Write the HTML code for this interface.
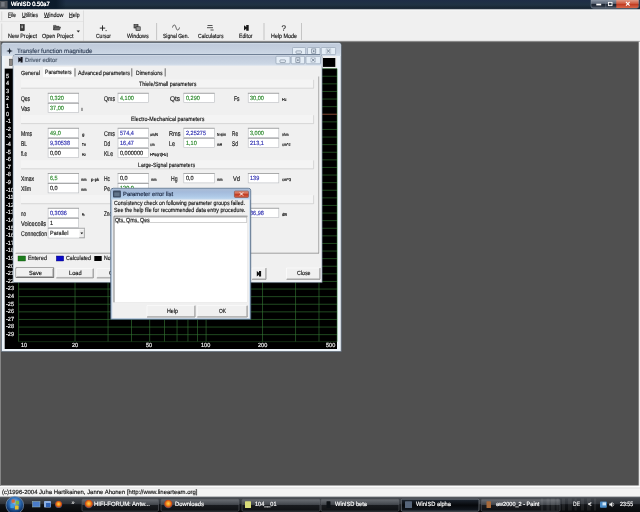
<!DOCTYPE html><html><head><meta charset="utf-8"><title>WinISD 0.50a7</title>
<style>
html,body{margin:0;padding:0;}
body{width:640px;height:512px;overflow:hidden;background:#505050;font-family:"Liberation Sans",sans-serif;text-rendering:geometricPrecision;}
#root{position:relative;width:640px;height:512px;overflow:hidden;background:#505050;filter:blur(0.3px);}
#root div{position:absolute;box-sizing:border-box;}
#root svg.L{position:absolute;left:0;top:0;overflow:visible;}
.t{position:absolute;white-space:nowrap;line-height:8px;height:8px;-webkit-text-stroke:0.16px;transform-origin:0 50%;}
.t u{text-decoration-thickness:0.4px;text-underline-offset:0.4px;text-decoration-color:#555;}
</style></head><body><div id="root">
<svg class="L" width="640" height="512" viewBox="0 0 640 512"><defs><linearGradient id="gT" x1="0" y1="0" x2="0" y2="1"><stop offset="0" stop-color="#1d2d47"/><stop offset="0.5" stop-color="#1f3243"/><stop offset="0.8" stop-color="#172533"/><stop offset="0.92" stop-color="#273442"/><stop offset="1" stop-color="#9aa3ad"/></linearGradient><linearGradient id="gTd" x1="0" y1="0" x2="1" y2="0"><stop offset="0" stop-color="#0b1a2a" stop-opacity="0.95"/><stop offset="0.85" stop-color="#0b1a2a" stop-opacity="0.95"/><stop offset="1" stop-color="#0b1a2a" stop-opacity="0"/></linearGradient><linearGradient id="gR" x1="0" y1="0" x2="0" y2="1"><stop offset="0" stop-color="#e09a86"/><stop offset="0.45" stop-color="#cf5a40"/><stop offset="0.55" stop-color="#c23c22"/><stop offset="1" stop-color="#d4664a"/></linearGradient><linearGradient id="gC" x1="0" y1="0" x2="0" y2="1"><stop offset="0" stop-color="#8993a2"/><stop offset="0.42" stop-color="#5d6878"/><stop offset="0.5" stop-color="#1d2532"/><stop offset="0.75" stop-color="#27303e"/><stop offset="1" stop-color="#56616f"/></linearGradient><linearGradient id="gW" x1="0" y1="0" x2="0" y2="1"><stop offset="0" stop-color="#d2dce8"/><stop offset="0.12" stop-color="#c0cbdb"/><stop offset="0.75" stop-color="#cad5e3"/><stop offset="1" stop-color="#d8e2ed"/></linearGradient><linearGradient id="gA" x1="0" y1="0" x2="0" y2="1"><stop offset="0" stop-color="#abbdd6"/><stop offset="0.3" stop-color="#a4bbdb"/><stop offset="0.75" stop-color="#b0cbe8"/><stop offset="1" stop-color="#c4daef"/></linearGradient></defs><rect x="0" y="0" width="640" height="9.9" fill="url(#gT)"/><rect x="0" y="0" width="66" height="8.6" fill="url(#gTd)"/><rect x="0" y="0.8" width="7.6" height="7.8" fill="#50545a"/><rect x="1.2" y="2" width="3.4" height="4.6" fill="#777b82"/><path d="M591 0 H638.8 V6 Q638.8 8.2 636.6 8.2 H593.2 Q591 8.2 591 6 Z" fill="url(#gC)" stroke="#8e98a6" stroke-width="0.5"/><path d="M616.3 0 H638.5 V6 Q638.5 7.9 636.5 7.9 H616.3 Z" fill="url(#gR)"/><path d="M605.8 0L605.8 8" stroke="#7d8796" stroke-width="0.5"/><rect x="596.3" y="3.7" width="4.9" height="1.7" fill="#fff"/><rect x="608.4" y="2.4" width="3.6" height="3.2" fill="#39424f" stroke="#fff" stroke-width="0.9"/><path d="M626 2 L629.6 5.6 M629.6 2 L626 5.6" fill="none" stroke="#fff" stroke-width="1.1"/><rect x="0" y="9.6" width="640" height="31.8" fill="#f0f0f0"/><rect x="0" y="9.6" width="640" height="0.8" fill="#f8f9fb"/><path d="M0 21.5L83.5 21.5" stroke="#dadada" stroke-width="0.5"/><path d="M83.5 10.5L83.5 41" stroke="#d2d2d2" stroke-width="0.6"/><path d="M1.7 11.5L1.7 20.5" stroke="#c8c8c8" stroke-width="0.6"/><path d="M1.7 23.5L1.7 40" stroke="#c8c8c8" stroke-width="0.6"/><path d="M0 41.2L640 41.2" stroke="#b0b0b0" stroke-width="0.6"/><path d="M0 41.9L640 41.9" stroke="#6a6a6a" stroke-width="0.6"/><path d="M156.6 23L156.6 40" stroke="#a8a8a8" stroke-width="0.6"/><path d="M264 23L264 40" stroke="#a8a8a8" stroke-width="0.6"/><path d="M301.5 23L301.5 40" stroke="#a8a8a8" stroke-width="0.6"/><rect x="20.4" y="24.6" width="3.8" height="6" fill="#3a3a3a" stroke="#151515" stroke-width="0.6"/><rect x="21.6" y="25.6" width="1" height="2.6" fill="#e4e4e4"/><path d="M53.5 30 L54.6 27 L60.6 27 L59.5 30 Z M53.5 30 V25.4 H56 L56.6 26.3 H59 V27" fill="#666" stroke="#2a2a2a" stroke-width="0.5"/><path d="M76.6 30.6 H80 L78.3 32.6 Z" fill="#222"/><path d="M102.5 25.4 V30.8 M99.8 28.1 H105.2" fill="none" stroke="#1a1a1a" stroke-width="0.9"/><rect x="105.6" y="30.1" width="1" height="1" fill="#222"/><rect x="134" y="24.6" width="4" height="3.4" fill="#777" stroke="#1a1a1a" stroke-width="0.6"/><rect x="136" y="26.8" width="4.2" height="3.6" fill="#999" stroke="#1a1a1a" stroke-width="0.6"/><path d="M172.5 27.5 C173.5 24 175 24 176 27.5 S178.5 31 179.5 27.5" fill="none" stroke="#333" stroke-width="0.8"/><path d="M207.5 25.5 H212.5 M207 27.7 H213 M210.5 30 H213.6" fill="none" stroke="#2a2a2a" stroke-width="0.8"/><path d="M244 25.2 L246.2 27 V25 H248.7 V30.7 H246.2 V28.8 L244 30.6 Z" fill="#1a1a1a"/></svg>
<span class="t" style="left:10.60px;top:1.30px;font-size:6.2px;color:#fff;transform:scaleX(0.932);text-shadow:0 0 0.4px #fff;">WinISD 0.50a7</span>
<span class="t" style="left:8px;top:12.40px;font-size:6.1px;color:#151515;transform:scaleX(0.813);"><u>F</u>ile</span>
<span class="t" style="left:22px;top:12.40px;font-size:6.1px;color:#151515;transform:scaleX(0.814);"><u>U</u>tilities</span>
<span class="t" style="left:43.50px;top:12.40px;font-size:6.1px;color:#151515;transform:scaleX(0.899);"><u>W</u>indow</span>
<span class="t" style="left:68.50px;top:12.40px;font-size:6.1px;color:#151515;transform:scaleX(0.837);"><u>H</u>elp</span>
<span class="t" style="left:8px;top:32.60px;font-size:6.1px;color:#151515;transform:scaleX(0.883);">New Project</span>
<span class="t" style="left:41.50px;top:32.60px;font-size:6.1px;color:#151515;transform:scaleX(0.885);">Open Project</span>
<span class="t" style="left:95.60px;top:32.60px;font-size:6.1px;color:#151515;transform:scaleX(0.820);">Cursor</span>
<span class="t" style="left:126.90px;top:32.60px;font-size:6.1px;color:#151515;transform:scaleX(0.873);">Windows</span>
<span class="t" style="left:163px;top:32.60px;font-size:6.1px;color:#151515;transform:scaleX(0.816);">Signal Gen.</span>
<span class="t" style="left:198px;top:32.60px;font-size:6.1px;color:#151515;transform:scaleX(0.836);">Calculators</span>
<span class="t" style="left:238.50px;top:32.60px;font-size:6.1px;color:#151515;transform:scaleX(0.848);">Editor</span>
<span class="t" style="left:270.50px;top:32.60px;font-size:6.1px;color:#151515;transform:scaleX(0.882);">Help Mode</span>
<span class="t" style="left:281.60px;top:24.80px;font-size:8px;color:#2a2a2a;">?</span>
<svg class="L" width="640" height="512" viewBox="0 0 640 512"><path d="M1.4 351.6 V45.2 Q1.4 42.7 3.9 42.7 H338.7 Q341.2 42.7 341.2 45.2 V351.6 Z" fill="#edf4fa" stroke="#566474" stroke-width="0.7"/><path d="M1.8 56 V45.2 Q1.8 43.1 3.9 43.1 H338.7 Q340.8 43.1 340.8 45.2 V56 Z" fill="url(#gW)"/><rect x="4.7" y="56" width="332.3" height="12.6" fill="#efefef"/><rect x="9.6" y="59.2" width="2.8" height="6.2" fill="#8a8580" stroke="#4a4a4a" stroke-width="0.6"/><rect x="323" y="58" width="12.3" height="8.9" fill="#000"/><rect x="4.7" y="68.6" width="332.3" height="280.4" fill="#000"/><path d="M9.6 47.8 L10.4 50.3 L12.9 51 L10.4 51.7 L9.6 54.2 L8.8 51.7 L6.3 51 L8.8 50.3 Z" fill="#1d2533"/><rect x="292.5" y="47.5" width="13.1" height="7.1" fill="#e4edf6" stroke="#8b9bad" stroke-width="0.6" rx="0.8"/><rect x="307.5" y="47.5" width="12.5" height="7.1" fill="#e4edf6" stroke="#8b9bad" stroke-width="0.6" rx="0.8"/><rect x="321.3" y="47.5" width="14.3" height="7.1" fill="#e4edf6" stroke="#8b9bad" stroke-width="0.6" rx="0.8"/><rect x="296.05" y="50.908" width="5.4" height="2.414" fill="none" stroke="#6c7a8c" stroke-width="0.6" rx="0.5"/><rect x="311.75" y="48.92" width="4" height="4.26" fill="none" stroke="#6c7a8c" stroke-width="0.7"/><rect x="313.05" y="50.34" width="1.4" height="1.562" fill="#6c7a8c"/><rect x="326.05" y="48.92" width="4.8" height="4.26" fill="none" stroke="#a3afbe" stroke-width="0.5"/><path d="M326.85 49.488 L330.05 52.612 M330.05 49.488 L326.85 52.612" fill="none" stroke="#6c7a8c" stroke-width="0.9"/><path d="M18.6 68.65H337M18.6 76.25H337M18.6 83.85H337M18.6 91.45H337M18.6 99.05H337M18.6 106.65H337M18.6 114.25H337M18.6 121.85H337M18.6 129.45H337M18.6 137.05H337M18.6 144.65H337M18.6 152.25H337M18.6 159.85H337M18.6 167.45H337M18.6 175.05H337M18.6 182.65H337M18.6 190.25H337M18.6 197.85H337M18.6 205.45H337M18.6 213.05H337M18.6 220.65H337M18.6 228.25H337M18.6 235.85H337M18.6 243.45H337M18.6 251.05H337M18.6 258.65H337M18.6 266.25H337M18.6 273.85H337M18.6 281.45H337M18.6 289.05H337M18.6 296.65H337M18.6 304.25H337M18.6 311.85H337M18.6 319.45H337M18.6 327.05H337M18.6 334.65H337M18.60 68.65V341.65M75.04 68.65V341.65M108.06 68.65V341.65M131.49 68.65V341.65M149.66 68.65V341.65M164.50 68.65V341.65M177.06 68.65V341.65M187.93 68.65V341.65M197.52 68.65V341.65M206.10 68.65V341.65M262.54 68.65V341.65M295.56 68.65V341.65M318.99 68.65V341.65M337.16 68.65V341.65" fill="none" stroke="#357a35" stroke-width="0.6"/><path d="M18.6 341.65L337 341.65" stroke="#1f4a1f" stroke-width="0.6"/><path d="M18.6 114.25L337 114.25" stroke="#a03030" stroke-width="0.7"/></svg>
<span class="t" style="left:16.50px;top:48.30px;font-size:6.2px;color:#36455c;transform:scaleX(0.983);">Transfer function magnitude</span>
<span class="t" style="left:6.10px;top:72.55px;font-size:5.9px;color:#f4f4f4;transform:scaleX(0.940);">5</span>
<span class="t" style="left:6.10px;top:80.15px;font-size:5.9px;color:#f4f4f4;transform:scaleX(0.940);">4</span>
<span class="t" style="left:6.10px;top:87.75px;font-size:5.9px;color:#f4f4f4;transform:scaleX(0.940);">3</span>
<span class="t" style="left:6.10px;top:95.35px;font-size:5.9px;color:#f4f4f4;transform:scaleX(0.940);">2</span>
<span class="t" style="left:6.10px;top:102.95px;font-size:5.9px;color:#f4f4f4;transform:scaleX(0.940);">1</span>
<span class="t" style="left:6.10px;top:110.55px;font-size:5.9px;color:#f4f4f4;transform:scaleX(0.940);">0</span>
<span class="t" style="left:6.10px;top:118.15px;font-size:5.9px;color:#f4f4f4;transform:scaleX(0.940);">-1</span>
<span class="t" style="left:6.10px;top:125.75px;font-size:5.9px;color:#f4f4f4;transform:scaleX(0.940);">-2</span>
<span class="t" style="left:6.10px;top:133.35px;font-size:5.9px;color:#f4f4f4;transform:scaleX(0.940);">-3</span>
<span class="t" style="left:6.10px;top:140.95px;font-size:5.9px;color:#f4f4f4;transform:scaleX(0.940);">-4</span>
<span class="t" style="left:6.10px;top:148.55px;font-size:5.9px;color:#f4f4f4;transform:scaleX(0.940);">-5</span>
<span class="t" style="left:6.10px;top:156.15px;font-size:5.9px;color:#f4f4f4;transform:scaleX(0.940);">-6</span>
<span class="t" style="left:6.10px;top:163.75px;font-size:5.9px;color:#f4f4f4;transform:scaleX(0.940);">-7</span>
<span class="t" style="left:6.10px;top:171.35px;font-size:5.9px;color:#f4f4f4;transform:scaleX(0.940);">-8</span>
<span class="t" style="left:6.10px;top:178.95px;font-size:5.9px;color:#f4f4f4;transform:scaleX(0.940);">-9</span>
<span class="t" style="left:6.10px;top:186.55px;font-size:5.9px;color:#f4f4f4;transform:scaleX(0.940);">-10</span>
<span class="t" style="left:6.10px;top:194.15px;font-size:5.9px;color:#f4f4f4;transform:scaleX(0.940);">-11</span>
<span class="t" style="left:6.10px;top:201.75px;font-size:5.9px;color:#f4f4f4;transform:scaleX(0.940);">-12</span>
<span class="t" style="left:6.10px;top:209.35px;font-size:5.9px;color:#f4f4f4;transform:scaleX(0.940);">-13</span>
<span class="t" style="left:6.10px;top:216.95px;font-size:5.9px;color:#f4f4f4;transform:scaleX(0.940);">-14</span>
<span class="t" style="left:6.10px;top:224.55px;font-size:5.9px;color:#f4f4f4;transform:scaleX(0.940);">-15</span>
<span class="t" style="left:6.10px;top:232.15px;font-size:5.9px;color:#f4f4f4;transform:scaleX(0.940);">-16</span>
<span class="t" style="left:6.10px;top:239.75px;font-size:5.9px;color:#f4f4f4;transform:scaleX(0.940);">-17</span>
<span class="t" style="left:6.10px;top:247.35px;font-size:5.9px;color:#f4f4f4;transform:scaleX(0.940);">-18</span>
<span class="t" style="left:6.10px;top:254.95px;font-size:5.9px;color:#f4f4f4;transform:scaleX(0.940);">-19</span>
<span class="t" style="left:6.10px;top:262.55px;font-size:5.9px;color:#f4f4f4;transform:scaleX(0.940);">-20</span>
<span class="t" style="left:6.10px;top:270.15px;font-size:5.9px;color:#f4f4f4;transform:scaleX(0.940);">-21</span>
<span class="t" style="left:6.10px;top:277.75px;font-size:5.9px;color:#f4f4f4;transform:scaleX(0.940);">-22</span>
<span class="t" style="left:6.10px;top:285.35px;font-size:5.9px;color:#f4f4f4;transform:scaleX(0.940);">-23</span>
<span class="t" style="left:6.10px;top:292.95px;font-size:5.9px;color:#f4f4f4;transform:scaleX(0.940);">-24</span>
<span class="t" style="left:6.10px;top:300.55px;font-size:5.9px;color:#f4f4f4;transform:scaleX(0.940);">-25</span>
<span class="t" style="left:6.10px;top:308.15px;font-size:5.9px;color:#f4f4f4;transform:scaleX(0.940);">-26</span>
<span class="t" style="left:6.10px;top:315.75px;font-size:5.9px;color:#f4f4f4;transform:scaleX(0.940);">-27</span>
<span class="t" style="left:6.10px;top:323.35px;font-size:5.9px;color:#f4f4f4;transform:scaleX(0.940);">-28</span>
<span class="t" style="left:6.10px;top:330.95px;font-size:5.9px;color:#f4f4f4;transform:scaleX(0.940);">-29</span>
<span class="t" style="left:20.72px;top:341.90px;font-size:5.9px;color:#f4f4f4;transform:scaleX(0.940);">10</span>
<span class="t" style="left:71.92px;top:341.90px;font-size:5.9px;color:#f4f4f4;transform:scaleX(0.940);">20</span>
<span class="t" style="left:146.12px;top:341.90px;font-size:5.9px;color:#f4f4f4;transform:scaleX(0.940);">50</span>
<span class="t" style="left:201.37px;top:341.90px;font-size:5.9px;color:#f4f4f4;transform:scaleX(0.940);">100</span>
<span class="t" style="left:257.77px;top:341.90px;font-size:5.9px;color:#f4f4f4;transform:scaleX(0.940);">200</span>
<span class="t" style="left:326.07px;top:341.90px;font-size:5.9px;color:#f4f4f4;transform:scaleX(0.940);">500</span>
<svg class="L" width="640" height="512" viewBox="0 0 640 512"><path d="M13 282.6 V57.2 Q13 54.8 15.4 54.8 H319.7 Q322.1 54.8 322.1 57.2 V282.6 Z" fill="#eaf1f8" stroke="#5f6f80" stroke-width="0.6"/><path d="M13.4 66 V57.2 Q13.4 55.2 15.4 55.2 H319.7 Q321.7 55.2 321.7 57.2 V66 Z" fill="url(#gW)"/><rect x="14.4" y="65.6" width="306.4" height="215.8" fill="#f0f0f0"/><path d="M15 54.5L320 54.5" stroke="#6a7a90" stroke-width="0.9"/><path d="M18.3 57 L20.5 58.8 V56.9 H22.6 V62.6 H20.5 V60.7 L18.3 62.5 Z" fill="#15151d"/><rect x="276" y="56.3" width="14" height="7.5" fill="#e4edf6" stroke="#8b9bad" stroke-width="0.6" rx="0.8"/><rect x="291.2" y="56.3" width="13.4" height="7.5" fill="#e4edf6" stroke="#8b9bad" stroke-width="0.6" rx="0.8"/><rect x="306" y="56.3" width="14.5" height="7.5" fill="#e4edf6" stroke="#8b9bad" stroke-width="0.6" rx="0.8"/><rect x="280" y="59.9" width="5.4" height="2.55" fill="none" stroke="#6c7a8c" stroke-width="0.6" rx="0.5"/><rect x="295.9" y="57.8" width="4" height="4.5" fill="none" stroke="#6c7a8c" stroke-width="0.7"/><rect x="297.2" y="59.3" width="1.4" height="1.65" fill="#6c7a8c"/><rect x="310.85" y="57.8" width="4.8" height="4.5" fill="none" stroke="#a3afbe" stroke-width="0.5"/><path d="M311.65 58.4 L314.85 61.7 M314.85 58.4 L311.65 61.7" fill="none" stroke="#6c7a8c" stroke-width="0.9"/><rect x="43" y="67" width="30.8" height="10.2" fill="#fbfbfb"/><path d="M75 68.3L75 76.5" stroke="#6e6e6e" stroke-width="1"/><path d="M131.8 68.3L131.8 76.5" stroke="#6e6e6e" stroke-width="1"/><path d="M165.2 68.3L165.2 76.5" stroke="#6e6e6e" stroke-width="1"/><path d="M318.7 76.5L318.7 253.2" stroke="#8c8c8c" stroke-width="0.7"/><path d="M15.6 253.2L319 253.2" stroke="#7c7c7c" stroke-width="0.7"/><path d="M15.8 77L15.8 253" stroke="#fafafa" stroke-width="0.6"/><rect x="21" y="79.6" width="292.6" height="8.6" fill="#f4f4f4"/><path d="M21 88.2 H313.6 V79.8" fill="none" stroke="#c2c2c2" stroke-width="0.6"/><rect x="21" y="115" width="292.6" height="8.6" fill="#f4f4f4"/><path d="M21 123.6 H313.6 V115.2" fill="none" stroke="#c2c2c2" stroke-width="0.6"/><rect x="21" y="160.2" width="292.6" height="8.6" fill="#f4f4f4"/><path d="M21 168.8 H313.6 V160.4" fill="none" stroke="#c2c2c2" stroke-width="0.6"/><rect x="21" y="195.1" width="292.6" height="8.6" fill="#f4f4f4"/><path d="M21 203.7 H313.6 V195.3" fill="none" stroke="#c2c2c2" stroke-width="0.6"/><rect x="48.1" y="93.25" width="30.6" height="9.4" fill="#fff" stroke="#b9bcc0" stroke-width="0.6"/><path d="M47.8 93.25L79 93.25" stroke="#8f8f8f" stroke-width="0.6"/><rect x="118" y="93.25" width="30.5" height="9.4" fill="#fff" stroke="#b9bcc0" stroke-width="0.6"/><path d="M117.7 93.25L148.8 93.25" stroke="#8f8f8f" stroke-width="0.6"/><rect x="183.8" y="93.25" width="30.5" height="9.4" fill="#fff" stroke="#b9bcc0" stroke-width="0.6"/><path d="M183.5 93.25L214.6 93.25" stroke="#8f8f8f" stroke-width="0.6"/><rect x="248.2" y="93.25" width="30.6" height="9.4" fill="#fff" stroke="#b9bcc0" stroke-width="0.6"/><path d="M247.9 93.25L279.1 93.25" stroke="#8f8f8f" stroke-width="0.6"/><rect x="48.1" y="103.25" width="30.6" height="9.4" fill="#fff" stroke="#b9bcc0" stroke-width="0.6"/><path d="M47.8 103.25L79 103.25" stroke="#8f8f8f" stroke-width="0.6"/><rect x="48.1" y="128.25" width="30.6" height="9.4" fill="#fff" stroke="#b9bcc0" stroke-width="0.6"/><path d="M47.8 128.25L79 128.25" stroke="#8f8f8f" stroke-width="0.6"/><rect x="118" y="128.25" width="30.5" height="9.4" fill="#fff" stroke="#b9bcc0" stroke-width="0.6"/><path d="M117.7 128.25L148.8 128.25" stroke="#8f8f8f" stroke-width="0.6"/><rect x="183.8" y="128.25" width="30.5" height="9.4" fill="#fff" stroke="#b9bcc0" stroke-width="0.6"/><path d="M183.5 128.25L214.6 128.25" stroke="#8f8f8f" stroke-width="0.6"/><rect x="248.2" y="128.25" width="30.6" height="9.4" fill="#fff" stroke="#b9bcc0" stroke-width="0.6"/><path d="M247.9 128.25L279.1 128.25" stroke="#8f8f8f" stroke-width="0.6"/><rect x="48.1" y="138.25" width="30.6" height="9.4" fill="#fff" stroke="#b9bcc0" stroke-width="0.6"/><path d="M47.8 138.25L79 138.25" stroke="#8f8f8f" stroke-width="0.6"/><rect x="118" y="138.25" width="30.5" height="9.4" fill="#fff" stroke="#b9bcc0" stroke-width="0.6"/><path d="M117.7 138.25L148.8 138.25" stroke="#8f8f8f" stroke-width="0.6"/><rect x="183.8" y="138.25" width="30.5" height="9.4" fill="#fff" stroke="#b9bcc0" stroke-width="0.6"/><path d="M183.5 138.25L214.6 138.25" stroke="#8f8f8f" stroke-width="0.6"/><rect x="248.2" y="138.25" width="30.6" height="9.4" fill="#fff" stroke="#b9bcc0" stroke-width="0.6"/><path d="M247.9 138.25L279.1 138.25" stroke="#8f8f8f" stroke-width="0.6"/><rect x="48.1" y="148.25" width="30.6" height="9.4" fill="#fff" stroke="#b9bcc0" stroke-width="0.6"/><path d="M47.8 148.25L79 148.25" stroke="#8f8f8f" stroke-width="0.6"/><rect x="118" y="148.25" width="30.5" height="9.4" fill="#fff" stroke="#b9bcc0" stroke-width="0.6"/><path d="M117.7 148.25L148.8 148.25" stroke="#8f8f8f" stroke-width="0.6"/><rect x="48.1" y="173.5" width="30.6" height="9.4" fill="#fff" stroke="#b9bcc0" stroke-width="0.6"/><path d="M47.8 173.5L79 173.5" stroke="#8f8f8f" stroke-width="0.6"/><rect x="118" y="173.5" width="30.5" height="9.4" fill="#fff" stroke="#b9bcc0" stroke-width="0.6"/><path d="M117.7 173.5L148.8 173.5" stroke="#8f8f8f" stroke-width="0.6"/><rect x="183.8" y="173.5" width="30.5" height="9.4" fill="#fff" stroke="#b9bcc0" stroke-width="0.6"/><path d="M183.5 173.5L214.6 173.5" stroke="#8f8f8f" stroke-width="0.6"/><rect x="248.2" y="173.5" width="30.6" height="9.4" fill="#fff" stroke="#b9bcc0" stroke-width="0.6"/><path d="M247.9 173.5L279.1 173.5" stroke="#8f8f8f" stroke-width="0.6"/><rect x="48.1" y="183.5" width="30.6" height="9.4" fill="#fff" stroke="#b9bcc0" stroke-width="0.6"/><path d="M47.8 183.5L79 183.5" stroke="#8f8f8f" stroke-width="0.6"/><rect x="118" y="183.5" width="30.5" height="9.4" fill="#fff" stroke="#b9bcc0" stroke-width="0.6"/><path d="M117.7 183.5L148.8 183.5" stroke="#8f8f8f" stroke-width="0.6"/><rect x="48.1" y="208.25" width="30.6" height="9.4" fill="#fff" stroke="#b9bcc0" stroke-width="0.6"/><path d="M47.8 208.25L79 208.25" stroke="#8f8f8f" stroke-width="0.6"/><rect x="248.2" y="208.25" width="30.6" height="9.4" fill="#fff" stroke="#b9bcc0" stroke-width="0.6"/><path d="M247.9 208.25L279.1 208.25" stroke="#8f8f8f" stroke-width="0.6"/><rect x="48.1" y="218.25" width="30.6" height="9.4" fill="#fff" stroke="#b9bcc0" stroke-width="0.6"/><path d="M47.8 218.25L79 218.25" stroke="#8f8f8f" stroke-width="0.6"/><rect x="48.1" y="228.25" width="36.6" height="9.8" fill="#fff" stroke="#b9bcc0" stroke-width="0.6"/><path d="M47.8 228.25L85 228.25" stroke="#8f8f8f" stroke-width="0.6"/><rect x="79.2" y="229.2" width="5" height="8.2" fill="#ececec" stroke="#fdfdfd" stroke-width="0.5"/><path d="M79.2 237.6 H84.4 V229.2" fill="none" stroke="#6a6a6a" stroke-width="0.5"/><path d="M80.4 232.6 H83.2 L81.8 234.3 Z" fill="#111"/><rect x="18" y="256" width="7.5" height="5" fill="#1c7c1c" stroke="#0a4a0a" stroke-width="0.4"/><rect x="56.3" y="256" width="7.4" height="5" fill="#0a0ac8" stroke="#00006a" stroke-width="0.4"/><rect x="94.3" y="256" width="7.4" height="5" fill="#000"/><rect x="16" y="267.9" width="37.8" height="9.7" fill="#f0f0f0" stroke="#3a3a3a" stroke-width="0.6"/><rect x="16.6" y="268.5" width="36.6" height="8.5" fill="#f0f0f0"/><path d="M16.6 277 V268.5 H53.2" fill="none" stroke="#ffffff" stroke-width="0.6"/><path d="M16.6 277 H53.2 V268.5" fill="none" stroke="#5e5e5e" stroke-width="0.6"/><path d="M17.1 276.5 H52.7 V269" fill="none" stroke="#a8a8a8" stroke-width="0.5"/><rect x="56.3" y="268.6" width="37" height="9.3" fill="#f0f0f0"/><path d="M56.3 277.9 V268.6 H93.3" fill="none" stroke="#ffffff" stroke-width="0.6"/><path d="M56.3 277.9 H93.3 V268.6" fill="none" stroke="#5e5e5e" stroke-width="0.6"/><path d="M56.8 277.4 H92.8 V269.1" fill="none" stroke="#a8a8a8" stroke-width="0.5"/><rect x="96.8" y="268.6" width="37.2" height="9.3" fill="#f0f0f0"/><path d="M96.8 277.9 V268.6 H134" fill="none" stroke="#ffffff" stroke-width="0.6"/><path d="M96.8 277.9 H134 V268.6" fill="none" stroke="#5e5e5e" stroke-width="0.6"/><path d="M97.3 277.4 H133.5 V269.1" fill="none" stroke="#a8a8a8" stroke-width="0.5"/><rect x="252" y="268" width="14" height="11.3" fill="#f0f0f0"/><path d="M252 279.3 V268 H266" fill="none" stroke="#ffffff" stroke-width="0.6"/><path d="M252 279.3 H266 V268" fill="none" stroke="#5e5e5e" stroke-width="0.6"/><path d="M252.5 278.8 H265.5 V268.5" fill="none" stroke="#a8a8a8" stroke-width="0.5"/><path d="M256.8 271 L259 272.8 V270.9 H261.1 V276.6 H259 V274.7 L256.8 276.5 Z" fill="#111"/><rect x="286.5" y="268" width="33.5" height="11.3" fill="#f0f0f0"/><path d="M286.5 279.3 V268 H320" fill="none" stroke="#ffffff" stroke-width="0.6"/><path d="M286.5 279.3 H320 V268" fill="none" stroke="#5e5e5e" stroke-width="0.6"/><path d="M287 278.8 H319.5 V268.5" fill="none" stroke="#a8a8a8" stroke-width="0.5"/></svg>
<span class="t" style="left:25px;top:56.60px;font-size:5.9px;color:#4a586a;transform:scaleX(1.006);">Driver editor</span>
<span class="t" style="left:20.60px;top:69.60px;font-size:6.1px;color:#151515;transform:scaleX(0.871);">General</span>
<span class="t" style="left:45.30px;top:68.50px;font-size:6.1px;color:#151515;transform:scaleX(0.848);">Parameters</span>
<span class="t" style="left:77.50px;top:69.60px;font-size:6.1px;color:#151515;transform:scaleX(0.872);">Advanced parameters</span>
<span class="t" style="left:135.50px;top:69.60px;font-size:6.1px;color:#151515;transform:scaleX(0.832);">Dimensions</span>
<span class="t" style="left:139px;top:81px;font-size:6.1px;color:#151515;transform:scaleX(0.871);">Thiele/Small parameters</span>
<span class="t" style="left:131px;top:116.40px;font-size:6.1px;color:#151515;transform:scaleX(0.871);">Electro-Mechanical parameters</span>
<span class="t" style="left:138px;top:161.60px;font-size:6.1px;color:#151515;transform:scaleX(0.850);">Large-Signal parameters</span>
<span class="t" style="left:136px;top:196.50px;font-size:6.1px;color:#151515;transform:scaleX(0.857);">Miscellaneous parameters</span>
<span class="t" style="left:21px;top:95.85px;font-size:6.8px;color:#151515;transform:scaleX(0.722);">Qes</span>
<span class="t" style="left:50.30px;top:94.75px;font-size:6px;color:#2e8a2e;transform:scaleX(0.920);">0,320</span>
<span class="t" style="left:104px;top:95.85px;font-size:6.8px;color:#151515;transform:scaleX(0.766);">Qms</span>
<span class="t" style="left:120.20px;top:94.75px;font-size:6px;color:#2e8a2e;transform:scaleX(0.920);">4,100</span>
<span class="t" style="left:170px;top:95.85px;font-size:6.8px;color:#151515;transform:scaleX(0.945);">Qts</span>
<span class="t" style="left:186px;top:94.75px;font-size:6px;color:#2e8a2e;transform:scaleX(0.920);">0,290</span>
<span class="t" style="left:233.50px;top:95.85px;font-size:6.8px;color:#151515;transform:scaleX(0.727);">Fs</span>
<span class="t" style="left:250.40px;top:94.75px;font-size:6px;color:#2e8a2e;transform:scaleX(0.920);">30,00</span>
<span class="t" style="left:281.50px;top:95.75px;font-size:4.3px;color:#111;transform:scaleX(0.855);-webkit-text-stroke:0.2px;">Hz</span>
<span class="t" style="left:21px;top:105.85px;font-size:6.8px;color:#151515;transform:scaleX(0.802);">Vas</span>
<span class="t" style="left:50.30px;top:104.75px;font-size:6px;color:#2e8a2e;transform:scaleX(0.920);">37,00</span>
<span class="t" style="left:81.60px;top:105.75px;font-size:4.3px;color:#111;-webkit-text-stroke:0.2px;">l</span>
<span class="t" style="left:21px;top:130.85px;font-size:6.8px;color:#151515;transform:scaleX(0.747);">Mms</span>
<span class="t" style="left:50.30px;top:129.75px;font-size:6px;color:#2e8a2e;transform:scaleX(0.920);">49,0</span>
<span class="t" style="left:82px;top:130.75px;font-size:4.3px;color:#111;-webkit-text-stroke:0.2px;">g</span>
<span class="t" style="left:104px;top:130.85px;font-size:6.8px;color:#151515;transform:scaleX(0.787);">Cms</span>
<span class="t" style="left:120.20px;top:129.75px;font-size:6px;color:#3030b0;transform:scaleX(0.920);">574,4</span>
<span class="t" style="left:150px;top:130.75px;font-size:4.3px;color:#111;transform:scaleX(0.778);-webkit-text-stroke:0.2px;">um/N</span>
<span class="t" style="left:168.50px;top:130.85px;font-size:6.8px;color:#151515;transform:scaleX(0.822);">Rms</span>
<span class="t" style="left:186px;top:129.75px;font-size:6px;color:#3030b0;transform:scaleX(0.920);">2,25275</span>
<span class="t" style="left:217px;top:130.75px;font-size:4.3px;color:#111;transform:scaleX(0.785);-webkit-text-stroke:0.2px;">N·s/m</span>
<span class="t" style="left:232px;top:130.85px;font-size:6.8px;color:#151515;transform:scaleX(0.689);">Re</span>
<span class="t" style="left:250.40px;top:129.75px;font-size:6px;color:#2e8a2e;transform:scaleX(0.920);">3,000</span>
<span class="t" style="left:282px;top:130.75px;font-size:4.3px;color:#111;transform:scaleX(0.778);-webkit-text-stroke:0.2px;">ohm</span>
<span class="t" style="left:21px;top:140.85px;font-size:6.8px;color:#151515;transform:scaleX(0.720);">BL</span>
<span class="t" style="left:50.30px;top:139.75px;font-size:6px;color:#3030b0;transform:scaleX(0.920);">9,30538</span>
<span class="t" style="left:82px;top:140.75px;font-size:4.3px;color:#111;transform:scaleX(0.643);-webkit-text-stroke:0.2px;">Tm</span>
<span class="t" style="left:104px;top:140.85px;font-size:6.8px;color:#151515;transform:scaleX(0.689);">Dd</span>
<span class="t" style="left:120.20px;top:139.75px;font-size:6px;color:#3030b0;transform:scaleX(0.920);">16,47</span>
<span class="t" style="left:150px;top:140.75px;font-size:4.3px;color:#111;transform:scaleX(0.785);-webkit-text-stroke:0.2px;">cm</span>
<span class="t" style="left:169px;top:140.85px;font-size:6.8px;color:#151515;transform:scaleX(0.793);">Le</span>
<span class="t" style="left:186px;top:139.75px;font-size:6px;color:#2e8a2e;transform:scaleX(0.920);">1,10</span>
<span class="t" style="left:217px;top:140.75px;font-size:4.3px;color:#111;transform:scaleX(0.748);-webkit-text-stroke:0.2px;">mH</span>
<span class="t" style="left:232px;top:140.85px;font-size:6.8px;color:#151515;transform:scaleX(0.720);">Sd</span>
<span class="t" style="left:250.40px;top:139.75px;font-size:6px;color:#3030b0;transform:scaleX(0.920);">213,1</span>
<span class="t" style="left:282px;top:140.75px;font-size:4.3px;color:#111;transform:scaleX(0.838);-webkit-text-stroke:0.2px;">cm^2</span>
<span class="t" style="left:21px;top:150.85px;font-size:6.8px;color:#151515;transform:scaleX(0.635);">fLe</span>
<span class="t" style="left:50.30px;top:149.75px;font-size:6px;color:#222;transform:scaleX(0.920);">0,00</span>
<span class="t" style="left:82px;top:150.75px;font-size:4.3px;color:#111;transform:scaleX(0.760);-webkit-text-stroke:0.2px;">Hz</span>
<span class="t" style="left:104px;top:150.85px;font-size:6.8px;color:#151515;transform:scaleX(0.744);">KLe</span>
<span class="t" style="left:120.20px;top:149.75px;font-size:6px;color:#222;transform:scaleX(0.920);">0,000000</span>
<span class="t" style="left:150px;top:150.75px;font-size:4.3px;color:#111;transform:scaleX(0.897);-webkit-text-stroke:0.2px;">H*sqrt(Hz)</span>
<span class="t" style="left:21px;top:176.10px;font-size:6.8px;color:#151515;transform:scaleX(0.748);">Xmax</span>
<span class="t" style="left:50.30px;top:175px;font-size:6px;color:#2e8a2e;transform:scaleX(0.920);">6,5</span>
<span class="t" style="left:81px;top:176px;font-size:4.3px;color:#111;transform:scaleX(0.767);-webkit-text-stroke:0.2px;">mm</span>
<span class="t" style="left:91px;top:176px;font-size:4.3px;color:#111;transform:scaleX(0.957);-webkit-text-stroke:0.2px;">p-pk</span>
<span class="t" style="left:104px;top:176.10px;font-size:6.8px;color:#151515;transform:scaleX(0.722);">Hc</span>
<span class="t" style="left:120.20px;top:175px;font-size:6px;color:#222;transform:scaleX(0.920);">0,0</span>
<span class="t" style="left:150.50px;top:176px;font-size:4.3px;color:#111;transform:scaleX(0.767);-webkit-text-stroke:0.2px;">mm</span>
<span class="t" style="left:171px;top:176.10px;font-size:6.8px;color:#151515;transform:scaleX(0.747);">Hg</span>
<span class="t" style="left:186px;top:175px;font-size:6px;color:#222;transform:scaleX(0.920);">0,0</span>
<span class="t" style="left:216.50px;top:176px;font-size:4.3px;color:#111;transform:scaleX(0.767);-webkit-text-stroke:0.2px;">mm</span>
<span class="t" style="left:233px;top:176.10px;font-size:6.8px;color:#151515;transform:scaleX(0.841);">Vd</span>
<span class="t" style="left:250.40px;top:175px;font-size:6px;color:#3030b0;transform:scaleX(0.920);">139</span>
<span class="t" style="left:281.50px;top:176px;font-size:4.3px;color:#111;transform:scaleX(0.888);-webkit-text-stroke:0.2px;">cm^3</span>
<span class="t" style="left:21px;top:186.10px;font-size:6.8px;color:#151515;transform:scaleX(0.757);">Xlim</span>
<span class="t" style="left:50.30px;top:185px;font-size:6px;color:#222;transform:scaleX(0.920);">0,0</span>
<span class="t" style="left:81px;top:186px;font-size:4.3px;color:#111;transform:scaleX(0.767);-webkit-text-stroke:0.2px;">mm</span>
<span class="t" style="left:104px;top:186.10px;font-size:6.8px;color:#151515;transform:scaleX(0.720);">Pe</span>
<span class="t" style="left:120.20px;top:185px;font-size:6px;color:#2e8a2e;transform:scaleX(0.920);">120,0</span>
<span class="t" style="left:21px;top:210.85px;font-size:6.8px;color:#151515;transform:scaleX(0.661);">no</span>
<span class="t" style="left:50.30px;top:209.75px;font-size:6px;color:#3030b0;transform:scaleX(0.920);">0,3036</span>
<span class="t" style="left:82px;top:210.75px;font-size:4.3px;color:#111;transform:scaleX(0.653);-webkit-text-stroke:0.2px;">%</span>
<span class="t" style="left:104px;top:210.85px;font-size:6.8px;color:#151515;transform:scaleX(0.691);">Znom</span>
<span class="t" style="left:233px;top:210.85px;font-size:6.8px;color:#151515;transform:scaleX(0.700);">SPL</span>
<span class="t" style="left:250.40px;top:209.75px;font-size:6px;color:#3030b0;transform:scaleX(0.920);">86,98</span>
<span class="t" style="left:282px;top:210.75px;font-size:4.3px;color:#111;transform:scaleX(0.950);-webkit-text-stroke:0.2px;">dB</span>
<span class="t" style="left:21px;top:220.85px;font-size:6.8px;color:#151515;transform:scaleX(0.827);">Voicecoils</span>
<span class="t" style="left:50.30px;top:219.75px;font-size:6px;color:#222;transform:scaleX(0.920);">1</span>
<span class="t" style="left:21px;top:230.85px;font-size:6.8px;color:#151515;transform:scaleX(0.756);">Connection</span>
<span class="t" style="left:50.30px;top:229.75px;font-size:6px;color:#222;transform:scaleX(0.920);">Parallel</span>
<span class="t" style="left:28px;top:255.30px;font-size:6.1px;color:#151515;transform:scaleX(0.886);">Entered</span>
<span class="t" style="left:66px;top:255.30px;font-size:6.1px;color:#151515;transform:scaleX(0.868);">Calculated</span>
<span class="t" style="left:104px;top:255.30px;font-size:6.1px;color:#151515;transform:scaleX(0.854);">Not consistent</span>
<span class="t" style="left:29px;top:269.55px;font-size:6.1px;color:#151515;transform:scaleX(0.929);">Save</span>
<span class="t" style="left:68.70px;top:270.05px;font-size:6.1px;color:#151515;transform:scaleX(0.929);">Load</span>
<span class="t" style="left:109px;top:270.05px;font-size:6.1px;color:#151515;transform:scaleX(0.893);">Clear</span>
<span class="t" style="left:296.50px;top:270.45px;font-size:6.1px;color:#151515;transform:scaleX(0.866);">Close</span>
<svg class="L" width="640" height="512" viewBox="0 0 640 512"><path d="M110.8 319.3 V190.6 Q110.8 188.3 113.2 188.3 H248.3 Q250.7 188.3 250.7 190.6 V319.3 Z" fill="#cfdff0" stroke="#4d6480" stroke-width="0.9"/><path d="M111.3 199.7 V190.8 Q111.3 188.8 113.2 188.8 H248.3 Q250.2 188.8 250.2 190.8 V199.7 Z" fill="url(#gA)"/><rect x="112.4" y="199.6" width="136.6" height="118.4" fill="#f0f0f0"/><rect x="113" y="190.6" width="7.9" height="6.9" fill="#3d4c63" rx="0.8"/><rect x="114.2" y="192.4" width="5.4" height="3.8" fill="#62758b"/><rect x="234.4" y="191" width="14.1" height="6.5" fill="url(#gR)" stroke="#7a3a30" stroke-width="0.5" rx="1"/><path d="M239.9 192.4 L243.1 195.6 M243.1 192.4 L239.9 195.6" fill="none" stroke="#fff" stroke-width="1"/><rect x="114" y="216.2" width="133.5" height="86.1" fill="#fff" stroke="#e6e6e6" stroke-width="0.6"/><path d="M114 302.3 V216.2 H247.5" fill="none" stroke="#5c5c5c" stroke-width="0.7"/><rect x="114.8" y="217.2" width="132" height="5.5" fill="none" stroke="#a4a4a4" stroke-width="0.5"/><rect x="147" y="305.6" width="48" height="11.4" fill="#f0f0f0"/><path d="M147 317 V305.6 H195" fill="none" stroke="#ffffff" stroke-width="0.6"/><path d="M147 317 H195 V305.6" fill="none" stroke="#5e5e5e" stroke-width="0.6"/><path d="M147.5 316.5 H194.5 V306.1" fill="none" stroke="#a8a8a8" stroke-width="0.5"/><rect x="197.2" y="305.6" width="50" height="11.4" fill="#f0f0f0"/><path d="M197.2 317 V305.6 H247.2" fill="none" stroke="#ffffff" stroke-width="0.6"/><path d="M197.2 317 H247.2 V305.6" fill="none" stroke="#5e5e5e" stroke-width="0.6"/><path d="M197.7 316.5 H246.7 V306.1" fill="none" stroke="#a8a8a8" stroke-width="0.5"/></svg>
<span class="t" style="left:122.70px;top:191px;font-size:6px;color:#1b2740;transform:scaleX(0.975);">Parameter error list</span>
<span class="t" style="left:114.20px;top:199.70px;font-size:6.1px;color:#151515;transform:scaleX(0.859);">Consistency check on following parameter groups failed.</span>
<span class="t" style="left:114.20px;top:207.30px;font-size:6.1px;color:#151515;transform:scaleX(0.861);">See the help file for recommended data entry procedure.</span>
<span class="t" style="left:115.30px;top:216.80px;font-size:6.1px;color:#151515;transform:scaleX(0.861);">Qts, Qms, Qes</span>
<span class="t" style="left:166.50px;top:308.10px;font-size:6.1px;color:#151515;transform:scaleX(0.877);">Help</span>
<span class="t" style="left:218.50px;top:308.10px;font-size:6.1px;color:#151515;transform:scaleX(0.794);">OK</span>
<svg class="L" width="640" height="512" viewBox="0 0 640 512"><rect x="0" y="485.7" width="640" height="12.3" fill="#f3f3f3"/><rect x="0" y="485.7" width="640" height="1.7" fill="#fdfdfd"/><path d="M0 488L640 488" stroke="#d6d6d6" stroke-width="0.7"/><rect x="638.7" y="41.6" width="1.3" height="444.4" fill="#ececec"/><rect x="0" y="42" width="1" height="443.7" fill="#868686"/><defs><linearGradient id="gK" x1="0" y1="0" x2="0" y2="1"><stop offset="0" stop-color="#6a6e74"/><stop offset="0.1" stop-color="#44484e"/><stop offset="0.48" stop-color="#2c3036"/><stop offset="0.52" stop-color="#121418"/><stop offset="1" stop-color="#08090b"/></linearGradient><linearGradient id="gB" x1="0" y1="0" x2="0" y2="1"><stop offset="0" stop-color="#6c7076"/><stop offset="0.44" stop-color="#43474d"/><stop offset="0.5" stop-color="#191b1f"/><stop offset="1" stop-color="#0e1013"/></linearGradient><linearGradient id="gBa" x1="0" y1="0" x2="0" y2="1"><stop offset="0" stop-color="#1f2732"/><stop offset="0.5" stop-color="#06080b"/><stop offset="1" stop-color="#141a22"/></linearGradient><radialGradient id="gF" cx="0.5" cy="0.45" r="0.55"><stop offset="0" stop-color="#ffd24a"/><stop offset="0.45" stop-color="#f08a1c"/><stop offset="0.75" stop-color="#c2451a"/><stop offset="1" stop-color="#35507a"/></radialGradient><radialGradient id="gO" cx="0.5" cy="0.35" r="0.65"><stop offset="0" stop-color="#8fc0ee"/><stop offset="0.45" stop-color="#2f6fb8"/><stop offset="0.8" stop-color="#123a72"/><stop offset="1" stop-color="#0a1f40"/></radialGradient></defs><rect x="0" y="496.6" width="640" height="15.4" fill="url(#gK)"/><rect x="82" y="499.2" width="76.5" height="12" fill="url(#gB)" stroke="#5a5e64" stroke-width="0.6" rx="1.2"/><circle cx="88.8" cy="504" r="4.3" fill="url(#gF)"/><rect x="161" y="499.2" width="78" height="12" fill="url(#gB)" stroke="#5a5e64" stroke-width="0.6" rx="1.2"/><circle cx="168.3" cy="504" r="4.3" fill="url(#gF)"/><rect x="242" y="499.2" width="78" height="12" fill="url(#gB)" stroke="#5a5e64" stroke-width="0.6" rx="1.2"/><rect x="245" y="501.2" width="6" height="6.8" fill="#d9dc78" rx="0.6"/><rect x="321" y="499.2" width="78" height="12" fill="url(#gB)" stroke="#5a5e64" stroke-width="0.6" rx="1.2"/><rect x="326.5" y="501.2" width="4" height="6.8" fill="#0c1015" rx="0.6"/><rect x="401.3" y="499.2" width="77.7" height="12" fill="url(#gBa)" stroke="#8a9098" stroke-width="0.6" rx="1.2"/><rect x="405" y="501.2" width="7" height="6.8" fill="#56657a" rx="0.6"/><rect x="481.3" y="499.2" width="78.7" height="12" fill="url(#gB)" stroke="#5a5e64" stroke-width="0.6" rx="1.2"/><rect x="486.5" y="501.2" width="4.5" height="6.8" fill="#a86a3a" rx="0.6"/><rect x="541" y="498.5" width="2.2" height="12" fill="#ffffff" opacity="0.07"/><rect x="546.5" y="498.5" width="3" height="12" fill="#ffffff" opacity="0.07"/><rect x="551" y="498.5" width="3.8" height="12" fill="#ffffff" opacity="0.07"/><rect x="556.5" y="498.5" width="2.2" height="12" fill="#ffffff" opacity="0.07"/><rect x="562" y="498.5" width="3" height="12" fill="#ffffff" opacity="0.07"/><rect x="568" y="498.5" width="3.8" height="12" fill="#ffffff" opacity="0.07"/><rect x="574.5" y="498.5" width="2.2" height="12" fill="#ffffff" opacity="0.07"/><rect x="581" y="498.5" width="3" height="12" fill="#ffffff" opacity="0.07"/><rect x="587" y="498.5" width="3.8" height="12" fill="#ffffff" opacity="0.07"/><rect x="594" y="498.5" width="2.2" height="12" fill="#ffffff" opacity="0.07"/><circle cx="14.8" cy="505.2" r="8.8" fill="url(#gO)" stroke="#7f98b4" stroke-width="0.7"/><rect x="11.6" y="499.4" width="3.2" height="3.4" fill="#d8683a" rx="0.6"/><rect x="15.6" y="500.8" width="3.4" height="3.8" fill="#84b83f" rx="0.6"/><rect x="10.4" y="504" width="3.6" height="4" fill="#3f9ae0" rx="0.6"/><rect x="14.9" y="505.6" width="3.7" height="4" fill="#e6c02a" rx="0.6"/><rect x="32.5" y="501.5" width="7.5" height="5.5" fill="#4a7cc8" stroke="#9bb" stroke-width="0.5"/><rect x="44" y="501" width="7" height="6.5" fill="#8fb0e0" rx="0.8"/><rect x="46" y="503" width="4.5" height="4" fill="#2f62b4"/><circle cx="58.6" cy="504.4" r="3.6" fill="url(#gF)"/><rect x="600" y="501.4" width="6.8" height="6.4" fill="#4a8cc8" rx="0.8"/><rect x="602.5" y="502.4" width="3.5" height="3" fill="#cfe6f8"/><path d="M609.3 503.5 H610.6 L612.4 501.8 V507.2 L610.6 505.5 H609.3 Z" fill="#eee"/><path d="M613.3 503 Q614.3 504.5 613.3 506" fill="none" stroke="#ddd" stroke-width="0.6"/></svg>
<span class="t" style="left:1.50px;top:488.80px;font-size:6.1px;color:#151515;transform:scaleX(0.978);">(c)1996-2004 Juha Hartikainen, Janne Ahonen [http://www.linearteam.org]</span>
<span class="t" style="left:94px;top:501.20px;font-size:6.1px;color:#fff;transform:scaleX(0.979);">HIFI-FORUM: Antw...</span>
<span class="t" style="left:175px;top:501.20px;font-size:6.1px;color:#fff;transform:scaleX(0.962);">Downloads</span>
<span class="t" style="left:254.50px;top:501.20px;font-size:6.1px;color:#fff;transform:scaleX(0.906);">104__01</span>
<span class="t" style="left:335px;top:501.20px;font-size:6.1px;color:#fff;transform:scaleX(0.935);">WinISD beta</span>
<span class="t" style="left:415.50px;top:501.20px;font-size:6.1px;color:#fff;transform:scaleX(0.939);">WinISD alpha</span>
<span class="t" style="left:495.50px;top:501.20px;font-size:6.1px;color:#fff;transform:scaleX(0.913);">aw2000_2 - Paint</span>
<span class="t" style="left:71.50px;top:499.10px;font-size:5.5px;color:#ddd;">»</span>
<span class="t" style="left:573px;top:501.20px;font-size:6.1px;color:#e8e8e8;transform:scaleX(0.827);">DE</span>
<span class="t" style="left:588px;top:501.20px;font-size:5.8px;color:#fff;font-weight:bold;">&lt;</span>
<span class="t" style="left:620px;top:501.20px;font-size:6.1px;color:#fff;transform:scaleX(0.866);">23:55</span>
</div></body></html>
